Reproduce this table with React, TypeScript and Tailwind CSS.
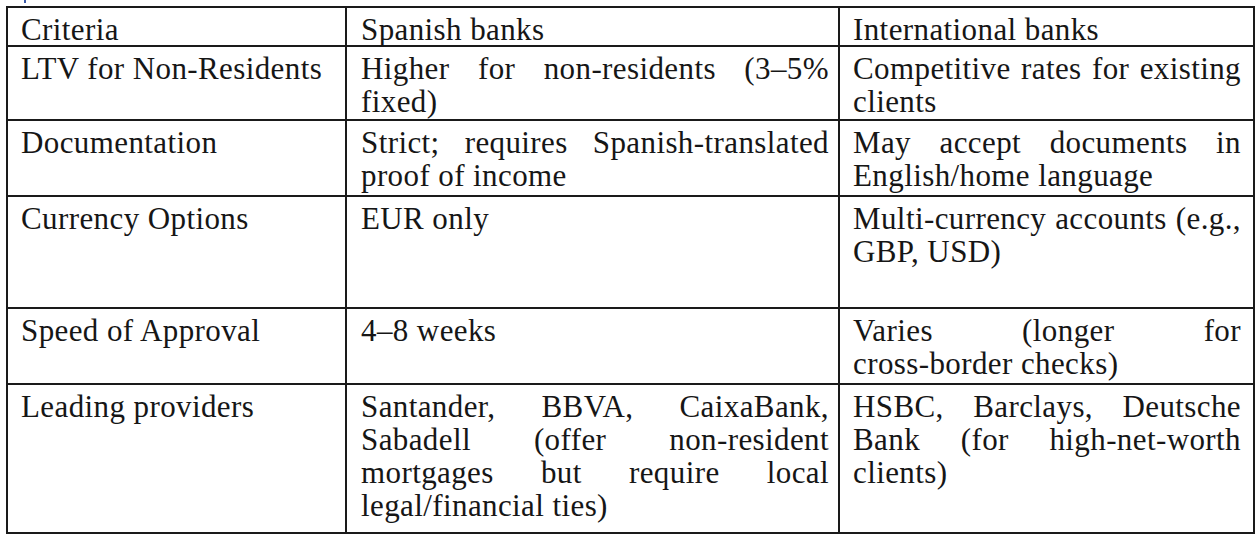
import React from "react";

const rows: string[][][] = [
  [["Criteria"], ["Spanish banks"], ["International banks"]],
  [
    ["LTV for Non-Residents"],
    ["Higher for non-residents (3–5%", "fixed)"],
    ["Competitive rates for existing", "clients"],
  ],
  [
    ["Documentation"],
    ["Strict; requires Spanish-translated", "proof of income"],
    ["May accept documents in", "English/home language"],
  ],
  [["Currency Options"], ["EUR only"], ["Multi-currency accounts (e.g.,", "GBP, USD)"]],
  [["Speed of Approval"], ["4–8 weeks"], ["Varies (longer for", "cross-border checks)"]],
  [
    ["Leading providers"],
    [
      "Santander, BBVA, CaixaBank,",
      "Sabadell (offer non-resident",
      "mortgages but require local",
      "legal/financial ties)",
    ],
    ["HSBC, Barclays, Deutsche", "Bank (for high-net-worth", "clients)"],
  ],
];

const pad = ["pl-[13px] pr-[10px]", "pl-[14px] pr-[9px]", "pl-[13px] pr-[12px]"];

function CellView({ lines, col }: { lines: string[]; col: number }) {
  return (
    <div className={`bg-white pt-[5px] ${pad[col]}`}>
      {lines.map((l, i) => {
        const last = i === lines.length - 1;
        return (
          <div
            key={i}
            className={
              last
                ? "whitespace-nowrap text-left"
                : "whitespace-nowrap text-justify [text-align-last:justify]"
            }
          >
            {l}
          </div>
        );
      })}
    </div>
  );
}

export default function App() {
  return (
    <div className="w-[1260px] h-[540px] bg-white text-[#161616] text-[31px] leading-[33px] tracking-[0.4px] font-['Liberation_Serif','Times_New_Roman',serif]">
      <div className="h-[6px] pl-[24px]">
        <div className="w-[2px] h-[3px] bg-[#3b5aa8]" />
      </div>
      <div className="ml-[6px] w-[1249px] grid grid-cols-[337px_491px_413px] grid-rows-[37px_72px_74px_110px_74px_147px] gap-[2px] p-[2px] bg-[#1a1a1a]">
        {rows.map((r, ri) =>
          r.map((c, ci) => <CellView key={`${ri}-${ci}`} lines={c} col={ci} />)
        )}
      </div>
    </div>
  );
}
